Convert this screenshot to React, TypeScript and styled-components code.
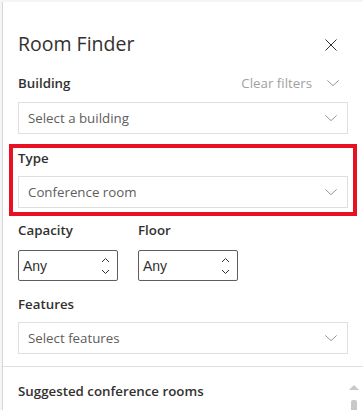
import styled, { createGlobalStyle } from "styled-components";

const GlobalStyle = createGlobalStyle`
  html, body {
    margin: 0;
    padding: 0;
    background: #ffffff;
  }
  body {
    font-family: "Segoe UI", "Open Sans", "Noto Sans", sans-serif;
    color: #323130;
  }
`;

const Chevron = ({ size = 14, color = "#8a8886" }: { size?: number; color?: string }) => (
  <svg width={size} height={size} viewBox="0 0 16 16" fill="none">
    <path d="M1.5 5 L8 11 L14.5 5" stroke={color} strokeWidth="1" />
  </svg>
);

const CloseIcon = () => (
  <svg width="12" height="12" viewBox="0 0 12 12" fill="none">
    <path d="M0.5 0.5 L11.5 11.5 M11.5 0.5 L0.5 11.5" stroke="#323130" strokeWidth="1" />
  </svg>
);

const SmallCaret = ({ up }: { up?: boolean }) => (
  <svg width="9" height="6" viewBox="0 0 9 6" fill="none">
    <path
      d={up ? "M1 5 L4.5 1.5 L8 5" : "M1 1 L4.5 4.5 L8 1"}
      stroke="#323130"
      strokeWidth="1"
    />
  </svg>
);

const Dropdown = ({ text }: { text: string }) => (
  <Select>
    <span>{text}</span>
    <Chevron />
  </Select>
);

const Spin = () => (
  <SpinBox>
    <span>Any</span>
    <SpinArrows>
      <SmallCaret up />
      <SmallCaret />
    </SpinArrows>
  </SpinBox>
);

export default function App() {
  return (
    <>
      <GlobalStyle />
      <Frame>
        <Panel>
          <Header>
            <Title>Room Finder</Title>
            <CloseButton>
              <CloseIcon />
            </CloseButton>
          </Header>

          <Body>
            <Field>
              <LabelRow>
                <Label>Building</Label>
                <ClearFilters>
                  Clear filters
                  <Chevron />
                </ClearFilters>
              </LabelRow>
              <Dropdown text="Select a building" />
            </Field>

            <Highlight>
              <Field>
                <Label>Type</Label>
                <Dropdown text="Conference room" />
              </Field>
            </Highlight>

            <SpinRow>
              <Field $gap={10}>
                <Label>Capacity</Label>
                <Spin />
              </Field>
              <Field $gap={10}>
                <Label>Floor</Label>
                <Spin />
              </Field>
            </SpinRow>

            <Field $top={3}>
              <Label>Features</Label>
              <Dropdown text="Select features" />
            </Field>
          </Body>

          <Suggested>
            <SectionTitle>Suggested conference rooms</SectionTitle>
            <Scrollbar>
              <ScrollUp />
              <ScrollThumb />
            </Scrollbar>
          </Suggested>
        </Panel>
      </Frame>
    </>
  );
}

const Frame = styled.div`
  width: 363px;
  height: 410px;
  background: #f3f5f7;
  padding-top: 2px;
  box-sizing: border-box;
  overflow: hidden;
`;

const Panel = styled.div`
  margin-left: 2px;
  height: 408px;
  background: #ffffff;
  border-left: 1px solid #d6d6d6;
  display: flex;
  flex-direction: column;
`;

const Header = styled.div`
  display: flex;
  align-items: center;
  justify-content: space-between;
  padding: 28px 26px 0 15px;
  height: 28px;
`;

const Title = styled.h1`
  margin: 0;
  font-size: 19.5px;
  font-weight: 400;
  line-height: 28px;
  color: #323130;
`;

const CloseButton = styled.div`
  display: flex;
  width: 12px;
  height: 12px;
  margin-top: 2px;
`;

const Body = styled.div`
  padding: 14px 15px 0 15px;
  display: flex;
  flex-direction: column;
  gap: 10px;
`;

const Field = styled.div<{ $gap?: number; $top?: number }>`
  display: flex;
  flex-direction: column;
  gap: ${(p) => p.$gap ?? 8}px;
  margin-top: ${(p) => p.$top ?? 0}px;
`;

const LabelRow = styled.div`
  display: flex;
  align-items: center;
  justify-content: space-between;
  height: 23px;
  margin-top: -1px;
`;

const Label = styled.div`
  font-size: 13.3px;
  font-weight: 600;
  line-height: 20px;
  color: #323130;
`;

const ClearFilters = styled.div`
  display: flex;
  align-items: center;
  gap: 14px;
  font-size: 13.3px;
  color: #a19f9d;
  padding-right: 8px;
`;

const Select = styled.div`
  height: 32px;
  box-sizing: border-box;
  border: 1px solid #e1dfdd;
  display: flex;
  align-items: center;
  justify-content: space-between;
  padding: 0 9px 0 9px;
  font-size: 13.3px;
  color: #605e5c;
`;

const Highlight = styled.div`
  margin: 0 -9px;
  padding: 0 5px 4px 5px;
  border: 4px solid #e81123;
`;

const SpinRow = styled.div`
  display: grid;
  grid-template-columns: 100px 100px;
  column-gap: 20px;
  margin-top: -6px;
`;

const SpinBox = styled.div`
  height: 31px;
  box-sizing: border-box;
  border: 1px solid #605e5c;
  border-radius: 2px;
  display: flex;
  align-items: center;
  justify-content: space-between;
  padding: 0 7px 0 4px;
  font-size: 14px;
  color: #323130;
  font-family: "Liberation Sans", Arial, sans-serif;
`;

const SpinArrows = styled.div`
  display: flex;
  flex-direction: column;
  gap: 6px;
`;

const Suggested = styled.div`
  margin-top: 12px;
  border-top: 1px solid #e1dfdd;
  padding: 14px 15px 0 15px;
  display: flex;
  justify-content: space-between;
  position: relative;
  flex: 1;
`;

const SectionTitle = styled.div`
  font-size: 13.3px;
  font-weight: 600;
  color: #323130;
  line-height: 20px;
`;

const Scrollbar = styled.div`
  position: absolute;
  right: 4px;
  top: 18px;
  display: flex;
  flex-direction: column;
  align-items: center;
  gap: 10px;
`;

const ScrollUp = styled.div`
  width: 0;
  height: 0;
  border-left: 5px solid transparent;
  border-right: 5px solid transparent;
  border-bottom: 5px solid #c8c8c8;
`;

const ScrollThumb = styled.div`
  width: 6px;
  height: 20px;
  border-radius: 2px;
  background: #c8c8c8;
`;
